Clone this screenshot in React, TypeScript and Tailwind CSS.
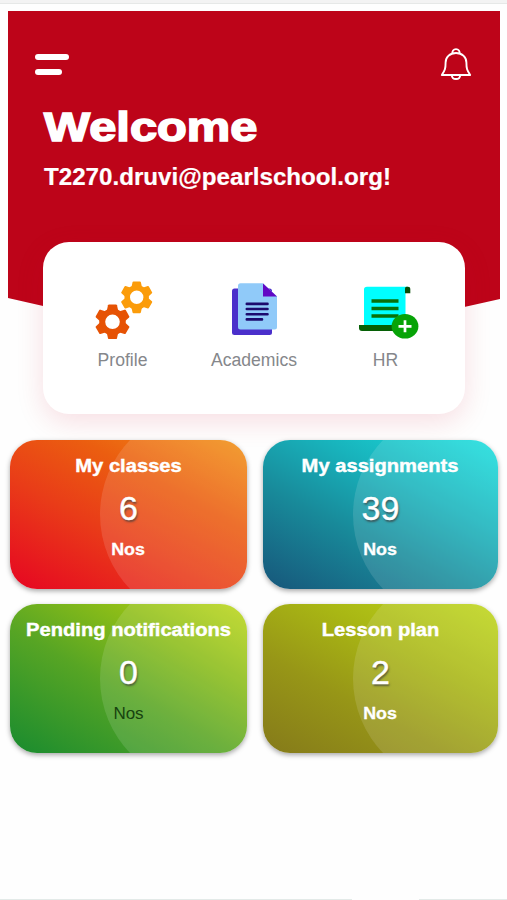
const TEETH = [0, 60, 120, 180, 240, 300]

type GearProps = {
  cx: number
  cy: number
  scale: number
  color: string
}

function Gear({ cx, cy, scale, color }: GearProps) {
  return (
    <g transform={`translate(${cx} ${cy}) scale(${scale})`} fill={color}>
      <circle r="10.3" fill="none" stroke={color} strokeWidth="6" />
      {TEETH.map((angle) => (
        <path
          key={angle}
          d="M-5.6 -11.5 L-4.5 -16.5 Q-4.3 -17.3 -3.5 -17.3 H3.5 Q4.3 -17.3 4.5 -16.5 L5.6 -11.5 Z"
          transform={`rotate(${angle})`}
        />
      ))}
    </g>
  )
}

function ProfileIcon() {
  return (
    <svg width="60" height="60" viewBox="0 0 60 60">
      <Gear cx={43.7} cy={18.3} scale={0.92} color="#fb9c0a" />
      <Gear cx={19.5} cy={42.8} scale={1} color="#e65204" />
    </svg>
  )
}

function AcademicsIcon() {
  return (
    <svg width="60" height="60" viewBox="0 0 60 60">
      <rect x="8" y="9.5" width="40" height="46.5" rx="2.5" fill="#4a2fcb" />
      <path d="M16.5 4.3 H39 L53 17.5 V48 Q53 50.5 50.5 50.5 H16.5 Q14 50.5 14 48 V6.8 Q14 4.3 16.5 4.3 Z" fill="#90caf9" />
      <path d="M39 4.5 L53 17.5 H39 Z" fill="#6208c4" />
      <path d="M22.8 24.9 H43.5 M22.8 30 H43.5 M22.8 35.2 H43.5 M22.8 40.4 H38" stroke="#1c0a6e" strokeWidth="2.6" strokeLinecap="round" />
    </svg>
  )
}

function HrIcon() {
  return (
    <svg width="60" height="60" viewBox="0 0 60 60" className="overflow-visible">
      <path d="M8 47 V10.5 Q8 7.7 11 7.7 H52 Q49.5 8.5 49.5 11.5 V47 Z" fill="#00ffff" />
      <path d="M50.5 7.7 H52 Q54.3 7.7 54.3 9.7 V14.2 H49 V9.5 Q49 8 50.5 7.7 Z" fill="#064d06" />
      <path d="M3 46 H40 V52 H6 Q3 52 3 49 Z" fill="#066006" />
      <path d="M15.5 22 H42.5 M15.5 29.5 H42.5 M15.5 37 H42.5" stroke="#08710a" strokeWidth="3.7" />
      <ellipse cx="49" cy="47.3" rx="13.4" ry="12.3" fill="#07a307" />
      <path d="M42.5 47.3 H55.5 M49 41.3 V53.3" stroke="#fff" strokeWidth="2.7" />
    </svg>
  )
}

function BellIcon() {
  return (
    <svg width="32" height="34" viewBox="0 0 32 34" fill="none" stroke="#fff" strokeWidth="1.9" strokeLinejoin="round">
      <path d="M12.6 5.6 A3.6 3.4 0 1 1 19.4 5.6" />
      <path d="M16 5 C9.5 5 5.6 9.4 5.6 14.6 C5.6 20.5 5 22.5 1.8 27 H30.2 C27 22.5 26.4 20.5 26.4 14.6 C26.4 9.4 22.5 5 16 5 Z" />
      <path d="M11.8 27.2 C12 32.3 20 32.3 20.2 27.2" />
    </svg>
  )
}

const menu = [
  { label: 'Profile', icon: <ProfileIcon /> },
  { label: 'Academics', icon: <AcademicsIcon /> },
  { label: 'HR', icon: <HrIcon /> },
]

const boldNos = 'font-bold text-white scale-x-[1.05] [-webkit-text-stroke:0.3px_#fff]'

const cards = [
  {
    title: 'My classes',
    value: 6,
    bg: 'bg-[linear-gradient(28deg,#e60522,#e93c18_40%,#eb5e10_68%,#f19216)]',
    unit: boldNos,
  },
  {
    title: 'My assignments',
    value: 39,
    bg: 'bg-[linear-gradient(28deg,#17567a,#188a9a_38%,#18b3bc_66%,#1be0df)]',
    unit: boldNos,
  },
  {
    title: 'Pending notifications',
    value: 0,
    bg: 'bg-[linear-gradient(30deg,#198b2f,#57a524_44%,#8cbd18_72%,#bdd71b)]',
    unit: 'text-[#17430f]',
  },
  {
    title: 'Lesson plan',
    value: 2,
    bg: 'bg-[linear-gradient(28deg,#857a1a,#979617_36%,#a9b714_66%,#bfd71b)]',
    unit: boldNos,
  },
]

export default function App() {
  return (
    <div className="flex h-[900px] w-[507px] flex-col overflow-hidden bg-[#fefefe] font-['Liberation_Sans',Arial,sans-serif]">
      <div className="h-1 shrink-0 border-b border-[#e6e8e7] bg-[#f3f3f3]" />

      <header className="ml-2 mr-[7px] mt-[7px] h-[343px] shrink-0 bg-[#bd0419] text-white [clip-path:polygon(0_0,100%_0,100%_288px,50%_343px,0_287px)]">
        <div className="flex items-start justify-between pl-[27px] pr-7 pt-[37px]">
          <div className="flex flex-col gap-[9px] pt-[6px]">
            <span className="h-1.5 w-[34px] rounded-full bg-white" />
            <span className="h-1.5 w-[27px] rounded-full bg-white" />
          </div>
          <BellIcon />
        </div>
        <h1 className="ml-9 mt-[22px] w-fit origin-left scale-x-[1.22] text-[40px] leading-[46px] font-bold [-webkit-text-stroke:1.6px_#fff]">
          Welcome
        </h1>
        <p className="ml-9 mt-[13px] w-fit origin-left scale-x-[1.05] text-[23px] leading-7 font-bold [-webkit-text-stroke:0.2px_#fff]">
          T2270.druvi@pearlschool.org!
        </p>
      </header>

      <nav className="relative ml-[43px] -mt-[112px] flex h-[172px] w-[422px] shrink-0 justify-center rounded-[26px] bg-white pt-[37px] shadow-[0_8px_28px_rgba(200,10,40,0.13)]">
        {menu.map((item) => (
          <a key={item.label} className="flex w-[131.5px] flex-col items-center">
            {item.icon}
            <span className="mt-[11px] text-[17.6px] leading-5 text-[#85878b]">{item.label}</span>
          </a>
        ))}
      </nav>

      <main className="relative mt-[26px] ml-2.5 grid grid-cols-[237px_235px] grid-rows-[149px_149px] gap-x-4 gap-y-[15px]">
        {cards.map((card) => (
          <section
            key={card.title}
            className={`relative flex flex-col items-center overflow-hidden rounded-[27px] shadow-[0_2px_5px_rgba(0,0,0,0.35)] ${card.bg}`}
          >
            <div className="absolute -top-[33px] left-[90px] size-[215px] rounded-full bg-white/12" />
            <h2 className="relative mt-[15px] scale-x-[1.12] whitespace-nowrap text-[18px] leading-[22px] font-bold text-white [-webkit-text-stroke:0.4px_#fff]">
              {card.title}
            </h2>
            <p className="relative mt-[11px] text-[34px] leading-10 text-white [-webkit-text-stroke:0.4px_#fff] [text-shadow:1px_2px_2px_rgba(60,60,60,0.7)]">
              {card.value}
            </p>
            <span className={`relative mt-[12px] text-[17px] leading-5 ${card.unit}`}>Nos</span>
          </section>
        ))}
      </main>

      <footer className="mt-auto flex h-px justify-between">
        <span className="w-[352px] bg-[#e3eae8]" />
        <span className="w-[88px] bg-[#e3eae8]" />
      </footer>
    </div>
  )
}
